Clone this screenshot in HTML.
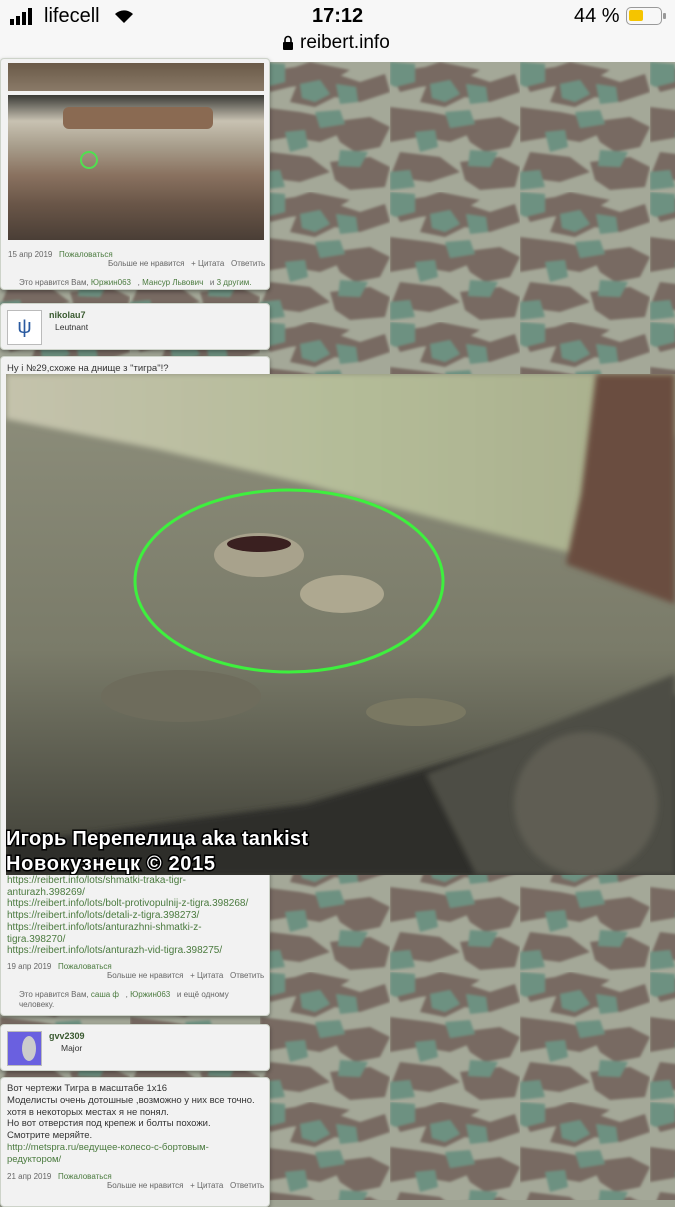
<!DOCTYPE html>
<html><head><meta charset="utf-8">
<style>
*{margin:0;padding:0;box-sizing:border-box}
body{width:675px;height:1200px;overflow:hidden;position:relative;font-family:"Liberation Sans","DejaVu Sans",sans-serif;background:#9fa393}
.bg{position:absolute;left:0;top:62px;width:675px;height:1138px}
.status{position:absolute;left:0;top:0;width:675px;height:62px;background:#f7f7f7}
.panel{position:absolute;left:0;width:270px;background:#f2f2f2;border:1px solid #cdd3c9;border-radius:4px;box-shadow:0 2px 4px rgba(0,0,0,.35);font-size:8px;color:#333}
.g{color:#4a7a3e}
.s{font-size:8px;color:#666}
.t{position:absolute;white-space:nowrap}
</style></head><body>
<svg class="bg" width="675" height="1138">
<defs>
<filter id="bl"><feGaussianBlur stdDeviation="1.2"/></filter>
<pattern id="c" width="130" height="130" patternUnits="userSpaceOnUse">
<rect width="130" height="130" fill="#a4a898"/>
<g filter="url(#bl)">
<polygon points="0,10 35,5 50,0 90,8 70,20 30,25 10,30" fill="#786a62"/>
<polygon points="40,15 70,10 100,20 125,12 130,30 100,40 75,35 55,45 30,40" fill="#786a62"/>
<polygon points="0,45 40,50 65,55 85,70 60,80 30,75 0,80" fill="#786a62"/>
<polygon points="70,60 110,55 130,65 120,85 95,90 80,80" fill="#786a62"/>
<polygon points="10,90 50,95 70,110 40,120 0,115" fill="#786a62"/>
<polygon points="70,100 110,95 130,105 125,125 90,128 75,118" fill="#786a62"/>
<polygon points="0,0 25,2 25,20 5,25 0,22" fill="#6d9181"/>
<polygon points="40,22 60,18 70,32 55,40 42,36" fill="#6d9181"/>
<polygon points="76,22 96,25 98,40 80,42" fill="#6d9181"/>
<polygon points="55,50 80,48 85,62 60,66" fill="#6d9181"/>
<polygon points="25,70 45,68 48,85 30,90" fill="#6d9181"/>
<polygon points="80,88 108,90 100,105 78,104" fill="#6d9181"/>
<polygon points="0,110 20,108 25,125 0,128" fill="#6d9181"/>
</g>
</pattern></defs>
<rect width="675" height="1138" fill="url(#c)"/>
</svg>

<div class="status">
 <svg style="position:absolute;left:10px;top:8px" width="30" height="18"><rect x="0" y="11" width="4" height="6" fill="#000"/><rect x="6" y="8" width="4" height="9" fill="#000"/><rect x="12" y="4" width="4" height="13" fill="#000"/><rect x="18" y="0" width="4" height="17" fill="#000"/></svg>
 <div class="t" style="left:44px;top:5px;font-size:20px">lifecell</div>
 <svg style="position:absolute;left:112px;top:6px" width="24" height="18" viewBox="0 0 24 18"><path d="M12 17 L3 8 A13 13 0 0 1 21 8 Z" fill="#000"/></svg>
 <div class="t" style="left:312px;top:5px;font-size:20px;font-weight:bold">17:12</div>
 <div class="t" style="left:574px;top:5px;font-size:20px">44 %</div>
 <div style="position:absolute;left:626px;top:7px;width:36px;height:18px;border:1.5px solid #999;border-radius:5px"><div style="position:absolute;left:2px;top:2px;width:14px;height:11px;background:#f5c400;border-radius:2px"></div></div>
 <div style="position:absolute;left:663px;top:13px;width:3px;height:6px;background:#999;border-radius:1px"></div>
 <svg style="position:absolute;left:282px;top:35px" width="12" height="16"><path d="M3 7 V4.5 A3 3 0 0 1 9 4.5 V7" stroke="#000" stroke-width="1.6" fill="none"/><rect x="1" y="7" width="10" height="8" rx="1" fill="#000"/></svg>
 <div class="t" style="left:300px;top:32px;font-size:19px">reibert.info</div>
</div>

<div class="panel" style="top:58px;height:232px">
 <div style="position:absolute;left:7px;top:4px;width:256px;height:28px;background:linear-gradient(#6a5a48,#8a7a68)"></div>
 <div style="position:absolute;left:7px;top:36px;width:256px;height:145px;background:linear-gradient(180deg,#3a3a36 0%,#c8c2b2 18%,#a89e8c 35%,#8a7260 55%,#6a5648 75%,#4a3e36 100%)">
  <div style="position:absolute;left:55px;top:12px;width:150px;height:22px;background:#8a6a52;border-radius:6px"></div>
  <div style="position:absolute;left:72px;top:56px;width:18px;height:18px;border:2px solid #50e050;border-radius:50%"></div>
 </div>
 <div class="t s" style="left:7px;top:191px">15 апр 2019 &nbsp;&nbsp;<span class="g">Пожаловаться</span></div>
 <div class="t s g" style="left:107px;top:200px">Больше не нравится &nbsp;&nbsp;+ Цитата &nbsp;&nbsp;Ответить</div>
 <div class="t s" style="left:18px;top:219px">Это нравится Вам, <span class="g">Юржин063</span> &nbsp;&nbsp;, <span class="g">Мансур Львович</span> &nbsp;&nbsp;и <span class="g">3 другим.</span></div>
</div>

<div class="panel" style="top:303px;height:47px">
 <div style="position:absolute;left:6px;top:6px;width:35px;height:35px;border:1px solid #bbb;background:#fff;text-align:center;color:#2a5aa0;font-size:20px;line-height:33px">ψ</div>
 <div class="t g" style="left:48px;top:6px;font-weight:bold;font-size:9px;color:#3a5a30">nikolau7</div>
 <div class="t" style="left:54px;top:18px;font-size:8.5px">Leutnant</div>
</div>

<div class="panel" style="top:356px;height:660px">
 <div class="t" style="left:6px;top:6px;font-size:9.5px">Ну і №29,схоже на днище з "тигра"!?</div>
 <div style="position:absolute;left:6px;top:518px;width:262px;line-height:11.7px;font-size:10px;white-space:nowrap" class="g">https://reibert.info/lots/shmatki-traka-tigr-<br>anturazh.398269/<br>https://reibert.info/lots/bolt-protivopulnij-z-tigra.398268/<br>https://reibert.info/lots/detali-z-tigra.398273/<br>https://reibert.info/lots/anturazhni-shmatki-z-<br>tigra.398270/<br>https://reibert.info/lots/anturazh-vid-tigra.398275/</div>
 <div class="t s" style="left:6px;top:605px">19 апр 2019 &nbsp;&nbsp;<span class="g">Пожаловаться</span></div>
 <div class="t s g" style="left:106px;top:614px">Больше не нравится &nbsp;&nbsp;+ Цитата &nbsp;&nbsp;Ответить</div>
 <div class="t s" style="left:18px;top:633px">Это нравится Вам, <span class="g">саша ф</span> &nbsp;&nbsp;, <span class="g">Юржин063</span> &nbsp;&nbsp;и ещё одному</div>
 <div class="t s" style="left:18px;top:643px">человеку.</div>
</div>

<div style="position:absolute;left:6px;top:374px;width:669px;height:501px;overflow:hidden;background:#7c7d6a">
 <svg width="669" height="501">
  <defs>
   <linearGradient id="a" x1="0" y1="0" x2="1" y2="0"><stop offset="0" stop-color="#c4c2ac"/><stop offset="0.5" stop-color="#b4bc98"/><stop offset="1" stop-color="#a8ae8c"/></linearGradient>
   <linearGradient id="b" x1="0" y1="0" x2="0" y2="1"><stop offset="0" stop-color="#8e8f7c"/><stop offset="0.55" stop-color="#7a7b69"/><stop offset="1" stop-color="#3e3e36"/></linearGradient>
   <filter id="f"><feGaussianBlur stdDeviation="3"/></filter>
  </defs>
  <rect width="669" height="501" fill="url(#b)"/>
  <polygon points="0,0 669,0 669,60 600,120 570,180 450,150 300,110 150,75 0,45" fill="url(#a)" filter="url(#f)"/>
  <polygon points="590,0 669,0 669,230 560,190 575,120" fill="#6a4e40" filter="url(#f)"/>
  <polygon points="0,470 300,430 669,320 669,501 0,501" fill="#2e2e2a" filter="url(#f)"/>
  <polygon points="420,400 669,300 669,501 470,501" fill="#4e4d45" filter="url(#f)"/>
  <circle cx="580" cy="430" r="72" fill="#5e5d52" filter="url(#f)"/>
  <ellipse cx="253" cy="181" rx="45" ry="22" fill="#a8a28c"/>
  <ellipse cx="253" cy="170" rx="32" ry="8" fill="#3a2020"/>
  <ellipse cx="336" cy="220" rx="42" ry="19" fill="#aea890"/>
  <ellipse cx="175" cy="322" rx="80" ry="26" fill="#6e6c5c"/>
  <ellipse cx="410" cy="338" rx="50" ry="14" fill="#7a7862"/>
  <ellipse cx="283" cy="207" rx="154" ry="91" fill="none" stroke="#3ef03e" stroke-width="3"/>
  <g font-family="Liberation Sans, DejaVu Sans, sans-serif" font-weight="bold" font-size="20" fill="#fff" stroke="#000" stroke-width="3" paint-order="stroke">
  <text x="0" y="471" textLength="302">Игорь Перепелица aka tankist</text>
  <text x="0" y="496" textLength="209">Новокузнецк ©  2015</text>
  </g>
 </svg>
</div>

<div class="panel" style="top:1024px;height:47px">
 <div style="position:absolute;left:6px;top:6px;width:35px;height:35px;border:1px solid #bbb;background:#6a60e0"><div style="position:absolute;left:14px;top:4px;width:14px;height:25px;background:#ccc;border-radius:50%"></div></div>
 <div class="t" style="left:48px;top:6px;font-weight:bold;font-size:9px;color:#3a5a30">gvv2309</div>
 <div class="t" style="left:60px;top:18px;font-size:8.5px">Major</div>
</div>

<div class="panel" style="top:1077px;height:130px">
 <div style="position:absolute;left:6px;top:5px;width:264px;line-height:11.8px;font-size:9.5px;white-space:nowrap">Вот чертежи Тигра в масштабе 1х16<br>Моделисты очень дотошные ,возможно у них все точно.<br>хотя в некоторых местах я не понял.<br>Но вот отверстия под крепеж и болты похожи.<br>Смотрите меряйте.<br><span class="g">http://metspra.ru/ведущее-колесо-с-бортовым-<br>редуктором/</span></div>
 <div class="t s" style="left:6px;top:94px">21 апр 2019 &nbsp;&nbsp;<span class="g">Пожаловаться</span></div>
 <div class="t s g" style="left:106px;top:103px">Больше не нравится &nbsp;&nbsp;+ Цитата &nbsp;&nbsp;Ответить</div>
</div>
</body></html>
